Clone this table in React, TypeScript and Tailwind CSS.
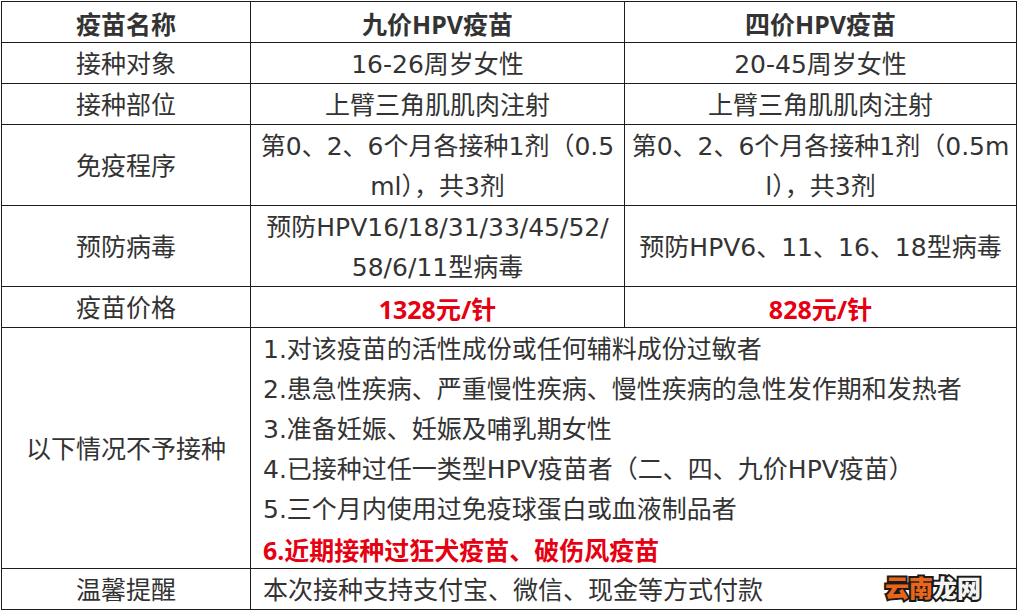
const font = { fontFamily: '"DejaVu Sans", "Noto Sans CJK SC", sans-serif' }
const boldFont = { fontFamily: '"Noto Sans", "Noto Sans CJK SC", sans-serif' }

const rows = [
  { label: '接种对象', nine: ['16-26周岁女性'], four: ['20-45周岁女性'] },
  { label: '接种部位', nine: ['上臂三角肌肌肉注射'], four: ['上臂三角肌肌肉注射'] },
  {
    label: '免疫程序',
    nine: ['第0、2、6个月各接种1剂（0.5', 'ml），共3剂'],
    four: ['第0、2、6个月各接种1剂（0.5m', 'l），共3剂'],
  },
  {
    label: '预防病毒',
    nine: ['预防HPV16/18/31/33/45/52/', '58/6/11型病毒'],
    four: ['预防HPV6、11、16、18型病毒'],
  },
]

const notes = [
  '1.对该疫苗的活性成份或任何辅料成份过敏者',
  '2.患急性疾病、严重慢性疾病、慢性疾病的急性发作期和发热者',
  '3.准备妊娠、妊娠及哺乳期女性',
  '4.已接种过任一类型HPV疫苗者（二、四、九价HPV疫苗）',
  '5.三个月内使用过免疫球蛋白或血液制品者',
]

// DejaVu sits a little high in the 40px line; nudge the text down to the reference baseline
const cell = 'border border-[#1c1c1c] p-0 text-center align-middle [&>div]:translate-y-[2px]'

function Lines({ lines }: { lines: string[] }) {
  return (
    <>
      {lines.map(l => (
        <div key={l} className="whitespace-nowrap">{l}</div>
      ))}
    </>
  )
}

export default function App() {
  return (
    <div className="w-[1019px] h-[616px] bg-white pl-px pt-px text-[25px] leading-[40px] text-[#333]" style={font}>
      <table className="w-[1015px] table-fixed border-collapse">
        <colgroup>
          <col className="w-[249px]" />
          <col className="w-[374px]" />
          <col className="w-[392px]" />
        </colgroup>
        <tbody>
          <tr className="font-bold" style={boldFont}>
            <td className={cell}><div>疫苗名称</div></td>
            <td className={cell}><div>九价HPV疫苗</div></td>
            <td className={cell}><div>四价HPV疫苗</div></td>
          </tr>
          {rows.map(r => (
            <tr key={r.label}>
              <td className={cell}><div>{r.label}</div></td>
              <td className={cell}><Lines lines={r.nine} /></td>
              <td className={cell}><Lines lines={r.four} /></td>
            </tr>
          ))}
          <tr>
            <td className={cell}><div>疫苗价格</div></td>
            <td className={`${cell} font-bold text-[#e60012]`} style={boldFont}><div>1328元/针</div></td>
            <td className={`${cell} font-bold text-[#e60012]`} style={boldFont}><div>828元/针</div></td>
          </tr>
          <tr>
            <td className={cell}><div>以下情况不予接种</div></td>
            <td colSpan={2} className={`${cell} text-left pl-3`}>
              <Lines lines={notes} />
              <div className="whitespace-nowrap font-bold text-[#e60012]" style={boldFont}>6.近期接种过狂犬疫苗、破伤风疫苗</div>
            </td>
          </tr>
          <tr>
            <td className={cell}><div>温馨提醒</div></td>
            <td colSpan={2} className={`${cell} relative text-left pl-3`}>
              <div className="whitespace-nowrap">本次接种支持支付宝、微信、现金等方式付款</div>
              <span
                className="absolute right-[35px] top-[1px] text-[24px] leading-[34px] font-black [-webkit-text-stroke:4px_#1a1a1a] [paint-order:stroke_fill]"
                style={{ fontFamily: '"Noto Sans CJK SC", sans-serif' }}
              >
                <span className="text-[#e8661c]">云南</span>
                <span className="text-[#f4f4f4]">龙网</span>
              </span>
            </td>
          </tr>
        </tbody>
      </table>
    </div>
  )
}
